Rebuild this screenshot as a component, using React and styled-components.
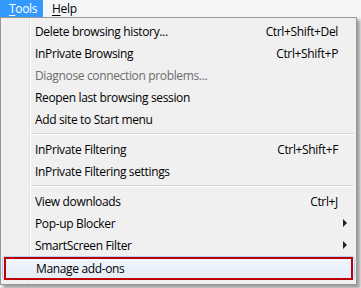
import React from 'react';
import styled, { createGlobalStyle } from 'styled-components';

const Global = createGlobalStyle`
  html, body {
    margin: 0;
    padding: 0;
    background: #f0f0f0;
  }
`;

const Screen = styled.div`
  width: 361px;
  height: 288px;
  overflow: hidden;
  background: #f0f0f0;
  font-family: 'Open Sans', 'Noto Sans', sans-serif;
  font-size: 12px;
  letter-spacing: -0.35px;
  color: #000;
`;

const MenuBar = styled.div`
  display: flex;
  height: 17px;
  background: #f5f6f7;
`;

const BarItem = styled.div`
  display: flex;
  align-items: center;
  padding: 0 6px 0 9px;
  height: 17px;
  color: ${(p) => (p.$active ? '#fff' : '#000')};
  background: ${(p) => (p.$active ? '#3399ff' : 'transparent')};
  & u {
    text-decoration-thickness: 1px;
    text-underline-offset: 2px;
  }
`;

const Dropdown = styled.div`
  width: 351px;
  border: 1px solid #979797;
  padding: 2px 2px 4px;
  background-color: #f0f0f0;
  background-image: linear-gradient(
    to right,
    transparent 28px,
    #e2e3e3 28px,
    #e2e3e3 29px,
    #ffffff 29px,
    #ffffff 30px,
    transparent 30px
  );
  box-shadow: 3px 3px 3px rgba(0, 0, 0, 0.35);
`;

const Item = styled.div`
  position: relative;
  display: flex;
  align-items: center;
  height: 22px;
  padding: 0 16px 0 32px;
  color: ${(p) => (p.$disabled ? '#6d6d6d' : '#000')};
  ${(p) =>
    p.$hover &&
    `
    margin: 0 -1px;
    padding: 0 17px 0 33px;
    height: 24px;
    border: 1px solid #aecff7;
    border-radius: 3px;
    background: linear-gradient(#f2f6fc, #e4ecf7);
    box-sizing: border-box;
  `}
  ${(p) =>
    p.$marked &&
    `
    &::after {
      content: '';
      position: absolute;
      left: 1px;
      top: 0px;
      right: 1px;
      bottom: -1px;
      border: 2px solid #c00000;
    }
  `}
`;

const Label = styled.span`
  flex: 1;
`;

const Shortcut = styled.span`
  text-align: right;
`;

const Arrow = styled.span`
  width: 0;
  height: 0;
  margin-right: -9px;
  border-top: 4px solid transparent;
  border-bottom: 4px solid transparent;
  border-left: 4px solid #222;
`;

const Separator = styled.div`
  height: 8px;
  margin-left: 28px;
  display: flex;
  flex-direction: column;
  justify-content: center;
  &::before {
    content: '';
    display: block;
    height: 1px;
    background: #d7d7d7;
  }
  &::after {
    content: '';
    display: block;
    height: 1px;
    background: #fff;
  }
`;

const groups = [
  [
    { label: 'Delete browsing history...', shortcut: 'Ctrl+Shift+Del' },
    { label: 'InPrivate Browsing', shortcut: 'Ctrl+Shift+P' },
    { label: 'Diagnose connection problems...', disabled: true },
    { label: 'Reopen last browsing session' },
    { label: 'Add site to Start menu' },
  ],
  [
    { label: 'InPrivate Filtering', shortcut: 'Ctrl+Shift+F' },
    { label: 'InPrivate Filtering settings' },
  ],
  [
    { label: 'View downloads', shortcut: 'Ctrl+J' },
    { label: 'Pop-up Blocker', submenu: true },
    { label: 'SmartScreen Filter', submenu: true },
    { label: 'Manage add-ons', hover: true, marked: true },
  ],
];

export default function App() {
  return (
    <Screen>
      <Global />
      <MenuBar>
        <BarItem $active>
          <span><u>T</u>ools</span>
        </BarItem>
        <BarItem>
          <span><u>H</u>elp</span>
        </BarItem>
      </MenuBar>
      <Dropdown>
        {groups.map((group, gi) => (
          <React.Fragment key={gi}>
            {gi > 0 && <Separator />}
            {group.map((it) => (
              <Item
                key={it.label}
                $disabled={it.disabled}
                $hover={it.hover}
                $marked={it.marked}
              >
                <Label>{it.label}</Label>
                {it.shortcut && <Shortcut>{it.shortcut}</Shortcut>}
                {it.submenu && <Arrow />}
              </Item>
            ))}
          </React.Fragment>
        ))}
      </Dropdown>
    </Screen>
  );
}
